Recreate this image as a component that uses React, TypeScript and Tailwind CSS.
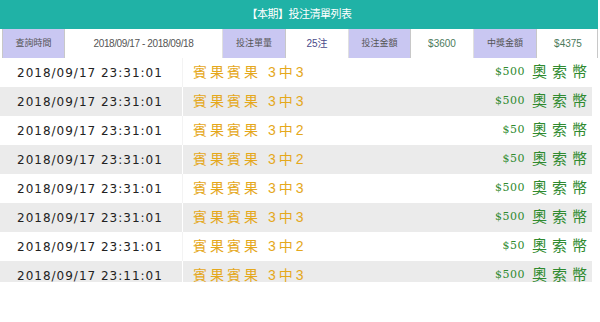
const rows = [
  { time: '2018/09/17 23:31:01', bet: '3中3', amount: '$500' },
  { time: '2018/09/17 23:31:01', bet: '3中3', amount: '$500' },
  { time: '2018/09/17 23:31:01', bet: '3中2', amount: '$50' },
  { time: '2018/09/17 23:31:01', bet: '3中2', amount: '$50' },
  { time: '2018/09/17 23:31:01', bet: '3中3', amount: '$500' },
  { time: '2018/09/17 23:31:01', bet: '3中3', amount: '$500' },
  { time: '2018/09/17 23:31:01', bet: '3中2', amount: '$50' },
  { time: '2018/09/17 23:11:01', bet: '3中3', amount: '$500' }
]

const cjk = "font-['Liberation_Sans','Noto_Sans_CJK_TC',sans-serif]"

export default function App() {
  return (
    <div className={`w-[600px] h-[322px] bg-white ${cjk}`}>
      <div className="w-[598px]">
        {/* Title bar */}
        <div className="h-[29px] bg-[#20b2a6] flex items-center justify-center text-white text-[11px] tracking-[-0.5px]">
          【本期】投注清單列表
        </div>

        {/* Summary */}
        <div className="ml-[2px] h-[29px] grid grid-cols-[62px_158px_63px_63px_62px_63px_63px_62px] border-l border-r border-[#c8c8c8] text-[9px] text-[#555]">
          <div className="bg-[#c9c7f2] border-r border-[#c8c8c8] flex items-center justify-center">查詢時間</div>
          <div className="border-r border-[#e0e0e0] flex items-center justify-center text-[10px] tracking-[-0.4px]">
            2018/09/17 - 2018/09/18
          </div>
          <div className="bg-[#c9c7f2] border-r border-[#c8c8c8] flex items-center justify-center">投注單量</div>
          <div className="border-r border-[#e0e0e0] flex items-center justify-center text-[10px] text-[#4a4a8a]">25注</div>
          <div className="bg-[#c9c7f2] border-r border-[#c8c8c8] flex items-center justify-center">投注金額</div>
          <div className="border-r border-[#e0e0e0] flex items-center justify-center text-[10px] text-[#4c7a5c]">$3600</div>
          <div className="bg-[#c9c7f2] border-r border-[#c8c8c8] flex items-center justify-center">中獎金額</div>
          <div className="flex items-center justify-center text-[10px] text-[#4c7a5c]">$4375</div>
        </div>

        {/* Bet list */}
        <div className="w-[592px] h-[224px] overflow-hidden">
          {rows.map((row, i) => (
            <div
              key={i}
              className={`h-[29px] grid grid-cols-[183px_1fr_auto] items-center ${i % 2 === 1 ? 'bg-[#ebebeb]' : 'bg-white'}`}
            >
              <div className={`h-full flex items-center pl-[17px] border-r ${i % 2 === 1 ? 'border-white' : 'border-[#f3f3f3]'} font-['DejaVu_Sans',sans-serif] text-[12px] tracking-[1px] text-[#222]`}>
                {row.time}
              </div>
              <div className="pl-[10px] text-[14px] tracking-[3px] text-[#e5a81c]">
                賓果賓果 {row.bet}
              </div>
              <div className="flex items-center text-[#2f8a2f]">
                <span className="font-['DejaVu_Serif',serif] text-[11px] tracking-[0.5px] mr-[7px]">{row.amount}</span>
                <span className="text-[15px] tracking-[5px]">奧索幣</span>
              </div>
            </div>
          ))}
        </div>
      </div>
    </div>
  )
}
